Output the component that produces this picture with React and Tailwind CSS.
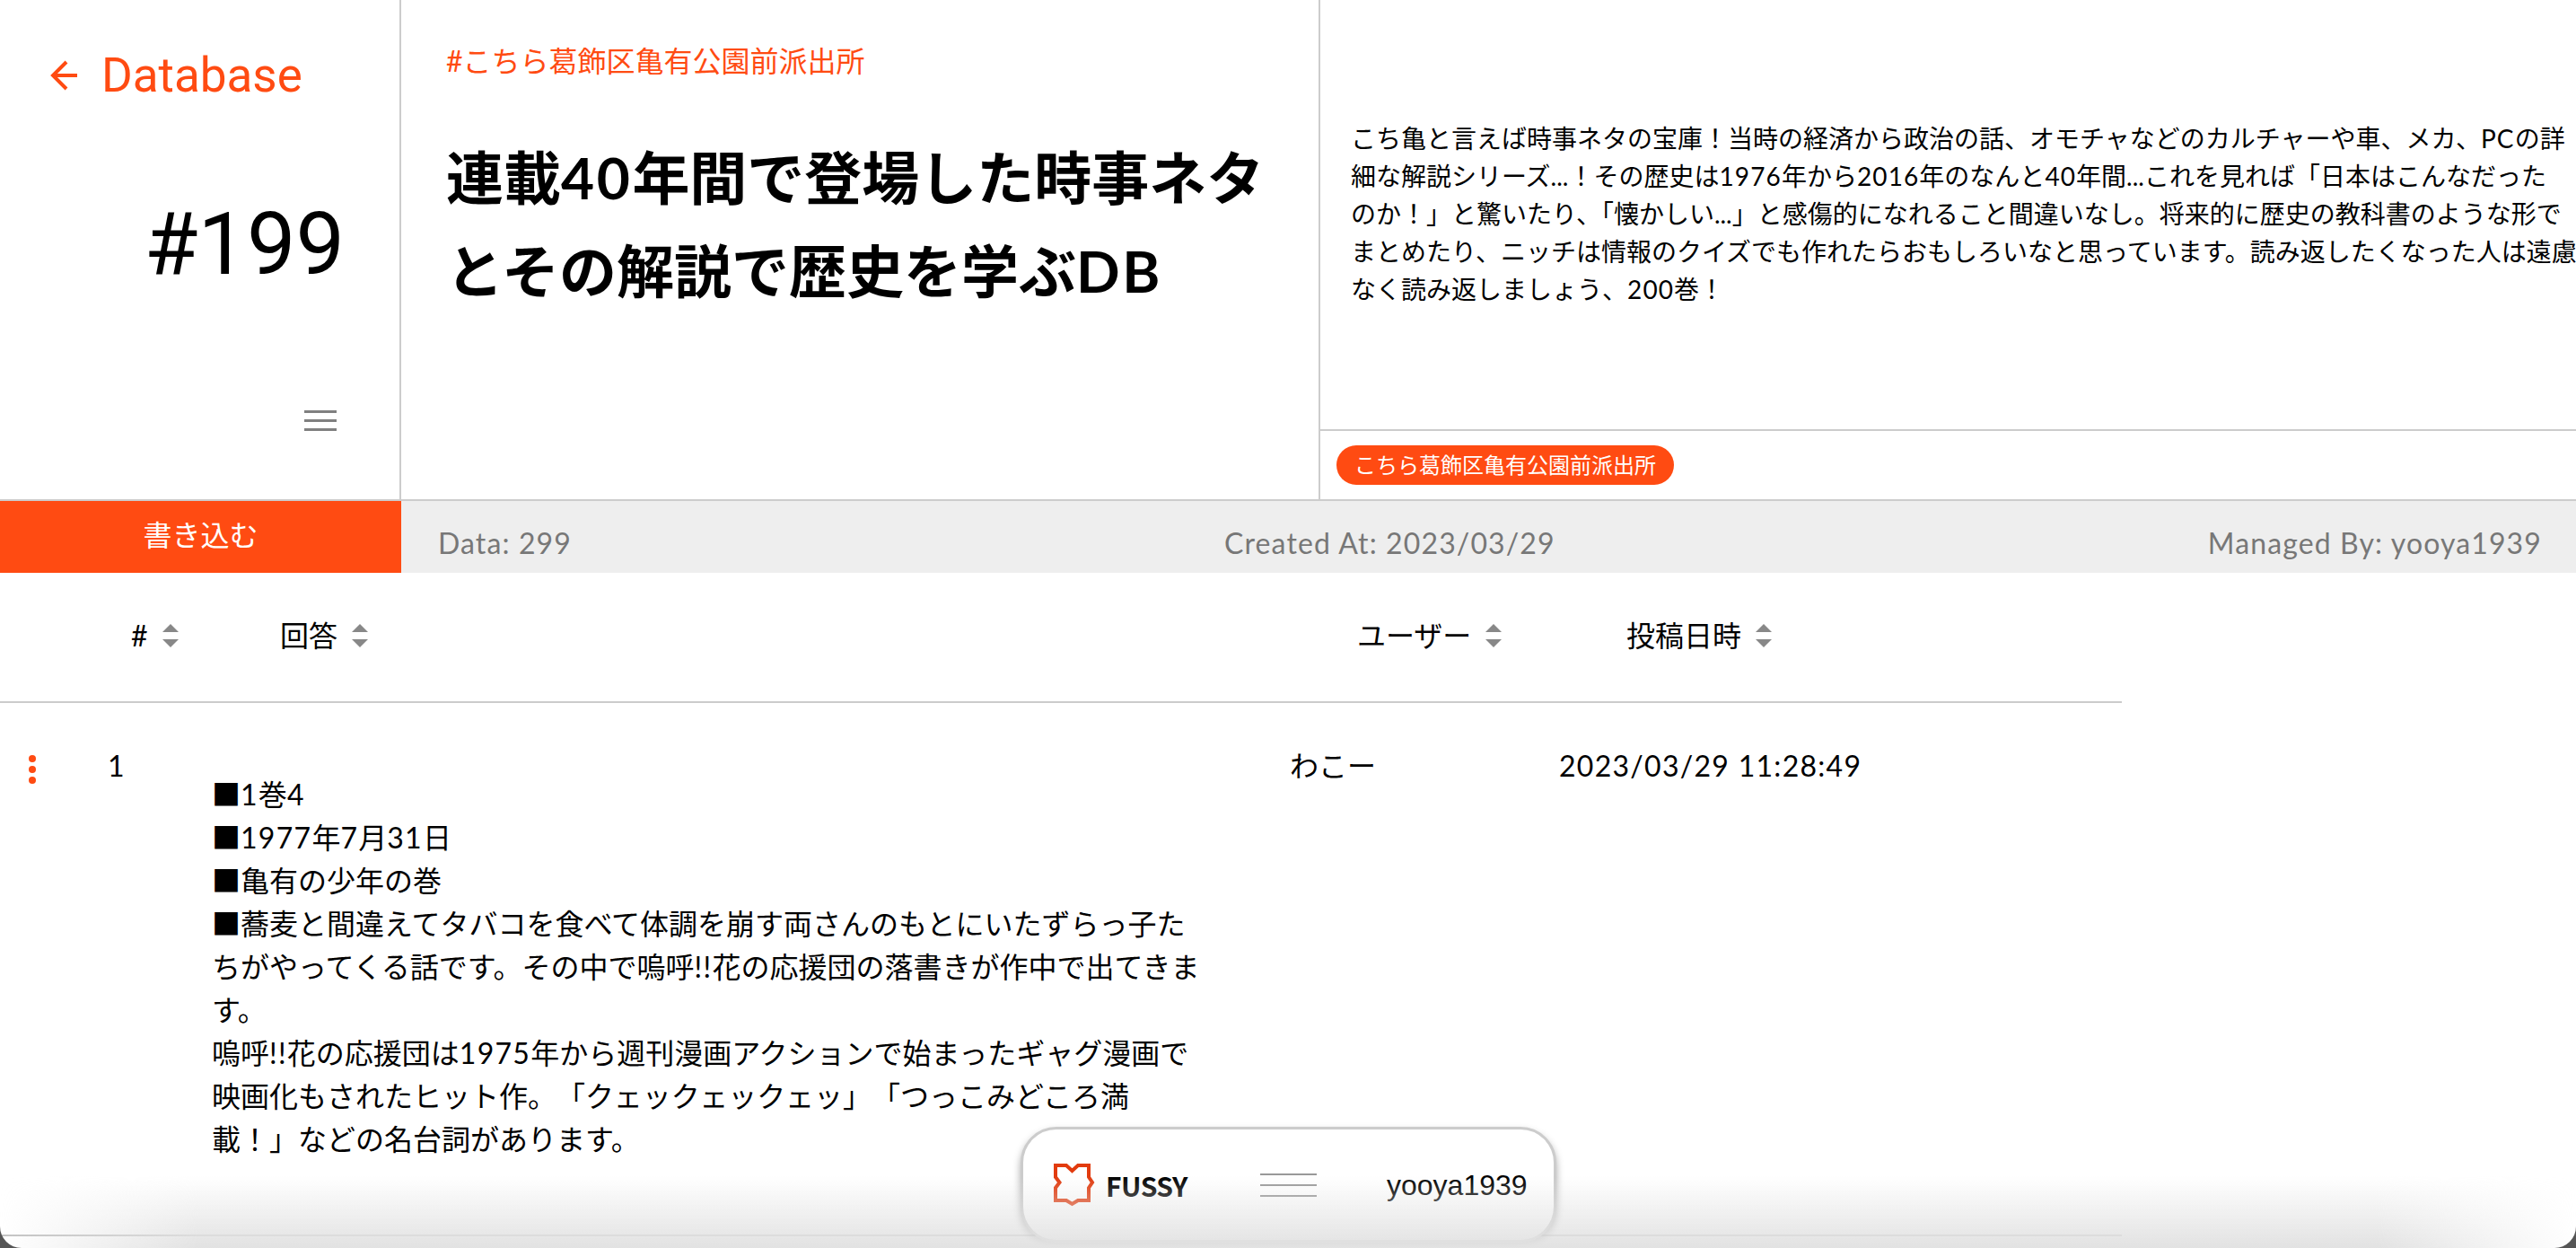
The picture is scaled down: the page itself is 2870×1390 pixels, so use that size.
const jp = "font-['Lato','Noto_Sans_CJK_JP',sans-serif]";

// latin runs sit wider in the reference than Lato does
const Txt = ({ children }) =>
  children.split(/([0-9A-Za-z:/! ]+)/).map((part, i) =>
    i % 2 ? (
      <span key={i} className="tracking-[0.04em]">
        {part}
      </span>
    ) : (
      part
    ),
  );

const SortIcon = () => (
  <svg width="18" height="26" viewBox="0 0 18 26" className="ml-4 shrink-0" fill="#888888">
    <path d="M9 0 L18 9 H0 Z" />
    <path d="M0 17 H18 L9 26 Z" />
  </svg>
);

const HeaderCell = ({ className, label }) => (
  <div className={`flex items-center ${className}`}>
    <span>{label}</span>
    <SortIcon />
  </div>
);

const FussyLogo = () => (
  <svg width="46" height="48" viewBox="0 0 46 48" fill="none" stroke="#e23b0e" strokeWidth="4">
    <path d="M2 2 H14 L20.5 8 L27 2 H39 V15 L43 21 L39 27 V41 H27 L20.5 45 L14 41 H2 V27 L6.5 21 L2 15 Z" />
  </svg>
);

const description = `こち亀と言えば時事ネタの宝庫！当時の経済から政治の話、オモチャなどのカルチャーや車、メカ、PCの詳
細な解説シリーズ...！その歴史は1976年から2016年のなんと40年間...これを見れば「日本はこんなだった
のか！」と驚いたり、「懐かしい...」と感傷的になれること間違いなし。将来的に歴史の教科書のような形で
まとめたり、ニッチは情報のクイズでも作れたらおもしろいなと思っています。読み返したくなった人は遠慮
なく読み返しましょう、200巻！`;

const answer = `■1巻4
■1977年7月31日
■亀有の少年の巻
■蕎麦と間違えてタバコを食べて体調を崩す両さんのもとにいたずらっ子たちがやってくる話です。その中で嗚呼!!花の応援団の落書きが作中で出てきます。
嗚呼!!花の応援団は1975年から週刊漫画アクションで始まったギャグ漫画で映画化もされたヒット作。「クェックェックェッ」「つっこみどころ満載！」などの名台詞があります。`;

export default function App() {
  return (
    <div className={`relative h-screen overflow-hidden bg-white text-black [text-spacing-trim:space-all] ${jp}`}>
      <header className="flex h-[558px] border-b-2 border-[#cccccc]">
        <div className="flex w-[447px] shrink-0 flex-col border-r-2 border-[#cccccc]">
          <div className="flex items-center pl-[50px] pt-[52px] text-[#ff4b12]">
            <svg width="44" height="44" viewBox="0 0 44 44" fill="none" stroke="currentColor" strokeWidth="4">
              <path d="M36 22 H10 M24 7 L9 22 L24 37" />
            </svg>
            <span className="ml-[19px] font-['Roboto',sans-serif] text-[53px] leading-[64px]">Database</span>
          </div>
          <div className="mt-[100px] pr-[61px] text-right font-['Roboto',sans-serif] text-[97px] leading-[112px]">#199</div>
          <div className="mt-[129px] flex flex-col items-end gap-[7px] pr-[70px]">
            <div className="h-[3px] w-[36px] bg-[#808080]" />
            <div className="h-[3px] w-[36px] bg-[#808080]" />
            <div className="h-[3px] w-[36px] bg-[#808080]" />
          </div>
        </div>
        <div className="w-[1024px] shrink-0 border-r-2 border-[#cccccc] pl-[50px]">
          <div className="pt-[44px] text-[32px] leading-[48px] text-[#ff4b12]">
            <Txt>#</Txt>こちら葛飾区亀有公園前派出所
          </div>
          <h1 className="mt-[54px] w-[930px] text-[64px] font-bold leading-[104px]">
            <Txt>連載40年間で登場した時事ネタとその解説で歴史を学ぶDB</Txt>
          </h1>
        </div>
        <div className="flex min-w-0 flex-1 flex-col">
          <div className="flex h-[480px] items-center border-b-2 border-[#cccccc] pb-[2px] pl-[34px] text-[28px] leading-[42px] [text-spacing-trim:normal]">
            <p className="shrink-0 whitespace-pre">
              <Txt>{description}</Txt>
            </p>
          </div>
          <div className="flex flex-1 items-center pl-[18px]">
            <span className="flex h-[44px] w-[376px] items-center justify-center rounded-full bg-[#ff4b12] text-[24px] text-white">
              こちら葛飾区亀有公園前派出所
            </span>
          </div>
        </div>
      </header>

      <div className="flex h-[80px] bg-[#eeeeee] text-[32px] text-[#777777]">
        <div className="flex w-[447px] shrink-0 items-center justify-center bg-[#ff4b12] pb-[4px] text-white">書き込む</div>
        <div className="flex flex-1 items-center justify-between pl-[41px] pr-[38px] pt-[14px] tracking-[0.035em]">
          <span>Data: 299</span>
          <span>Created At: 2023/03/29</span>
          <span>Managed By: yooya1939</span>
        </div>
      </div>

      <div className="w-[2364px] text-[32px]">
        <div className="flex h-[145px] items-center border-b-2 border-[#cccccc] pb-[4px]">
          <HeaderCell className="w-[312px] pl-[146px]" label="#" />
          <HeaderCell className="w-[1200px]" label="回答" />
          <HeaderCell className="w-[300px]" label="ユーザー" />
          <HeaderCell className="flex-1" label="投稿日時" />
        </div>
        <div className="flex h-[594px] border-b-2 border-[#c4c4c4] pt-[46px] leading-[48px]">
          <div className="flex w-[120px] shrink-0 flex-col gap-[4px] pl-[32px] pt-[12px]">
            <div className="size-[8px] rounded-full bg-[#ff4b12]" />
            <div className="size-[8px] rounded-full bg-[#ff4b12]" />
            <div className="size-[8px] rounded-full bg-[#ff4b12]" />
          </div>
          <div className="w-[116px] shrink-0">1</div>
          <div className="w-[1201px] shrink-0 pt-[32px]">
            <p className="w-[1104px] whitespace-pre-line">
              <Txt>{answer}</Txt>
            </p>
          </div>
          <div className="w-[300px] shrink-0">わこー</div>
          <div className="flex-1 tracking-[0.04em]">2023/03/29 11:28:49</div>
        </div>
      </div>

      <div className="absolute left-[1137px] top-[1255px] flex h-[129px] w-[597px] items-center rounded-[40px] border-[3px] border-[#cccccc] bg-white pl-[34px] shadow-[0_5px_8px_rgba(0,0,0,0.35)]">
        <FussyLogo />
        <span className="ml-[12px] w-[172px] font-['Noto_Sans_CJK_JP',sans-serif] text-[30px] font-bold leading-none tracking-[-0.5px]">FUSSY</span>
        <div className="flex w-[63px] flex-col gap-[10px]">
          <div className="h-[2px] bg-[#999999]" />
          <div className="h-[2px] bg-[#999999]" />
          <div className="h-[2px] bg-[#999999]" />
        </div>
        <span className="ml-[78px] font-['Liberation_Sans',sans-serif] text-[32px]">yooya1939</span>
      </div>

      {/* bottom fade and the window's rounded corners */}
      <div className="pointer-events-none absolute inset-x-0 bottom-0 h-[80px] bg-gradient-to-b from-transparent to-[#e2e2e2] [mask-image:linear-gradient(to_right,transparent,black_220px,black_calc(100%-220px),transparent)]" />
      <div className="pointer-events-none absolute inset-0 rounded-b-[24px] shadow-[0_0_0_24px_#555555]" />
    </div>
  );
}
